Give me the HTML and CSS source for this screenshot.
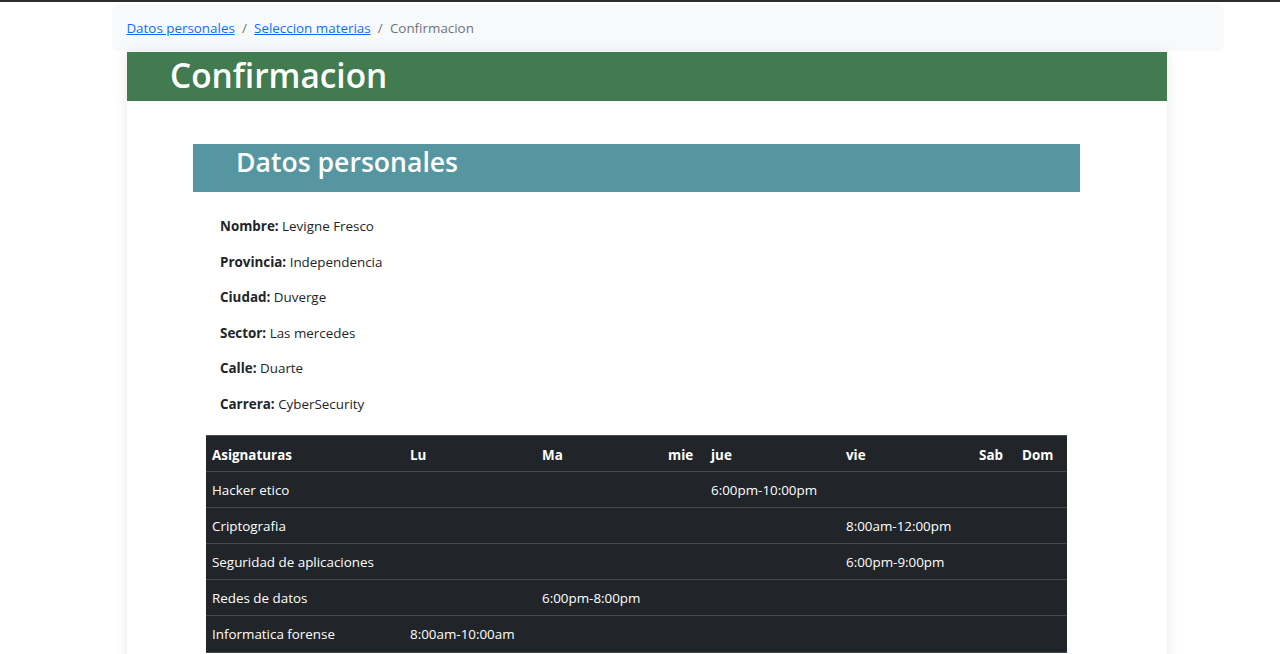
FILE: index.html
```html
<!DOCTYPE html>
<html lang="es">
<head>
<meta charset="utf-8">
<title>Confirmacion</title>
<link rel="stylesheet" href="styles.css">
</head>
<body>
<div class="topline"></div>
<nav class="crumbs">
  <a href="#">Datos personales</a><span class="sep">/</span><a href="#">Seleccion materias</a><span class="sep">/</span><span class="active">Confirmacion</span>
</nav>
<main class="card">
  <header class="card-head"><h1>Confirmacion</h1></header>
  <section class="card-body">
    <div class="section-title"><h2>Datos personales</h2></div>
    <div class="info">
      <p><strong>Nombre:</strong> Levigne Fresco</p>
      <p><strong>Provincia:</strong> Independencia</p>
      <p><strong>Ciudad:</strong> Duverge</p>
      <p><strong>Sector:</strong> Las mercedes</p>
      <p><strong>Calle:</strong> Duarte</p>
      <p><strong>Carrera:</strong> CyberSecurity</p>
    </div>
    <table class="schedule">
      <colgroup>
        <col class="c-asig"><col class="c-lu"><col class="c-ma"><col class="c-mie"><col class="c-jue"><col class="c-vie"><col class="c-sab"><col class="c-dom">
      </colgroup>
      <thead>
        <tr><th>Asignaturas</th><th>Lu</th><th>Ma</th><th>mie</th><th>jue</th><th>vie</th><th>Sab</th><th>Dom</th></tr>
      </thead>
      <tbody>
        <tr><td>Hacker etico</td><td></td><td></td><td></td><td>6:00pm-10:00pm</td><td></td><td></td><td></td></tr>
        <tr><td>Criptografia</td><td></td><td></td><td></td><td></td><td>8:00am-12:00pm</td><td></td><td></td></tr>
        <tr><td>Seguridad de aplicaciones</td><td></td><td></td><td></td><td></td><td>6:00pm-9:00pm</td><td></td><td></td></tr>
        <tr><td>Redes de datos</td><td></td><td>6:00pm-8:00pm</td><td></td><td></td><td></td><td></td><td></td></tr>
        <tr><td>Informatica forense</td><td>8:00am-10:00am</td><td></td><td></td><td></td><td></td><td></td><td></td></tr>
      </tbody>
    </table>
  </section>
</main>
</body>
</html>
```
FILE: styles.css
```css
* { box-sizing: border-box; }
body {
  margin: 0;
  font-family: "Open Sans", "Noto Sans", sans-serif;
  font-size: 13.4px;
  line-height: 21.6px;
  color: #212529;
  background: #fff;
}
.topline { height: 2px; background: #2e2e2e; }
.crumbs {
  margin: 2px 0 0 112px;
  width: 1112px;
  height: 47px;
  padding: 14px 14.4px 12px;
  background: #f8f9fa;
  border-radius: 6px;
  display: flex;
  align-items: center;
}
.crumbs a { color: #0d6efd; text-decoration: underline; }
.crumbs .sep { color: #6c757d; padding: 0 7.2px; }
.crumbs .active { color: #6c757d; }

.card {
  margin: 1px 0 0 127px;
  width: 1040px;
  background: #fff;
  box-shadow: 0 0 12px rgba(0,0,0,0.09);
  padding-bottom: 60px;
}
.card-head {
  background: #427b4f;
  height: 49px;
  padding: 2px 0 0 43px;
}
.card-head h1 {
  margin: 0;
  font-size: 33.4px;
  font-weight: 600;
  line-height: 43.2px;
  color: #fff;
}
.card-body { padding: 43px 0 0 66px; }
.section-title {
  width: 887px;
  height: 48px;
  background: #5596a0;
  padding: 1px 0 0 43px;
}
.section-title h2 {
  margin: 0;
  font-size: 26.6px;
  font-weight: 600;
  line-height: 34.6px;
  color: #fff;
}
.info { margin: 24px 0 0 27px; }
.info p { margin: 0 0 14px; line-height: 21.6px; }
.info strong { font-weight: 700; }

.schedule {
  margin: 19px 0 0 13px;
  width: 861px;
  table-layout: fixed;
  border-collapse: collapse;
  background: #212529;
  color: #fff;
  border-top: 1px solid #4a4e52;
}
.schedule .c-asig { width: 198px; }
.schedule .c-lu { width: 132px; }
.schedule .c-ma { width: 126px; }
.schedule .c-mie { width: 43px; }
.schedule .c-jue { width: 135px; }
.schedule .c-vie { width: 133px; }
.schedule .c-sab { width: 43px; }
.schedule .c-dom { width: 51px; }
.schedule th, .schedule td {
  text-align: left;
  line-height: 21.6px;
  border-bottom: 1px solid #45494d;
  white-space: nowrap;
}
.schedule th { font-weight: 700; padding: 9.4px 6px 4.2px; }
.schedule td { font-weight: 400; padding: 7.8px 6px 5.8px; }
```
